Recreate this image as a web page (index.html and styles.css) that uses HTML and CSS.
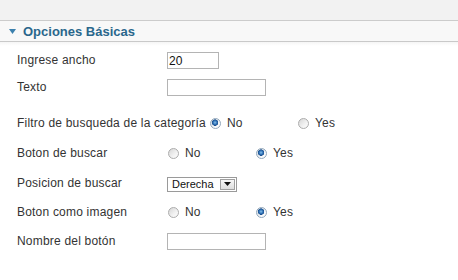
FILE: index.html
```html
<!DOCTYPE html>
<html lang="es">
<head>
<meta charset="utf-8">
<title>Opciones Básicas</title>
<link rel="stylesheet" href="styles.css">
</head>
<body>
<div class="topbar"></div>
<div class="panel-head">
  <svg class="toggle" width="7" height="5" viewBox="0 0 7 5"><polygon points="0,0 7,0 3.5,5" fill="#3b80ad"/></svg>
  <span class="panel-title">Opciones Básicas</span>
</div>
<div class="panel-body">
  <div class="group">
    <div class="row row-text">
      <span class="key">Ingrese ancho</span>
      <input class="text short" type="text" value="20">
    </div>
    <div class="row row-text">
      <span class="key">Texto</span>
      <input class="text wide" type="text" value="">
    </div>
  </div>
  <div class="group">
    <div class="row row-radio">
      <span class="key">Filtro de busqueda de la categoría</span>
      <div class="options">
        <label class="option"><input class="radio" type="radio" name="filtro" checked><span>No</span></label>
        <label class="option"><input class="radio" type="radio" name="filtro"><span>Yes</span></label>
      </div>
    </div>
    <div class="row row-radio">
      <span class="key">Boton de buscar</span>
      <div class="options">
        <label class="option"><input class="radio" type="radio" name="boton"><span>No</span></label>
        <label class="option"><input class="radio" type="radio" name="boton" checked><span>Yes</span></label>
      </div>
    </div>
    <div class="row row-select">
      <span class="key">Posicion de buscar</span>
      <div class="select">
        <span class="select-value">Derecha</span>
        <span class="select-btn"><svg width="7" height="4" viewBox="0 0 7 4"><polygon points="0,0 7,0 3.5,4" fill="#111"/></svg></span>
      </div>
    </div>
    <div class="row row-radio-short">
      <span class="key">Boton como imagen</span>
      <div class="options">
        <label class="option"><input class="radio" type="radio" name="imagen"><span>No</span></label>
        <label class="option"><input class="radio" type="radio" name="imagen" checked><span>Yes</span></label>
      </div>
    </div>
    <div class="row row-last">
      <span class="key">Nombre del botón</span>
      <input class="text wide" type="text" value="">
    </div>
  </div>
</div>
</body>
</html>
```
FILE: styles.css
```css
html, body {
  margin: 0;
  padding: 0;
  background: #ffffff;
  font-family: "Liberation Sans", Arial, sans-serif;
  font-size: 12px;
  color: #333333;
}

.topbar {
  height: 20px;
  background: #f2f2f2;
  border-bottom: 1px solid #cccccc;
}

.panel-head {
  height: 20px;
  background: #f8f8f8;
  border-bottom: 1px solid #c9c9c9;
  display: flex;
  align-items: center;
  padding-left: 9px;
  gap: 7px;
}

.toggle {
  display: block;
  margin-top: 1px;
}

.panel-title {
  font-size: 13px;
  font-weight: bold;
  color: #2a678c;
}

.panel-body {
  padding: 4px 0 0 17px;
  background: linear-gradient(#f5f5f5, #ffffff 4px);
  letter-spacing: 0.2px;
}

.group {
  display: flex;
  flex-direction: column;
}

.group + .group {
  margin-top: 8px;
}

.row {
  display: flex;
  align-items: center;
}

.row-text { height: 27px; }
.row-radio { height: 30px; }
.row-select { height: 30px; }
.row-radio-short { height: 28px; }
.row-last { height: 29px; }

.key {
  flex: 0 0 auto;
  min-width: 150px;
  box-sizing: border-box;
  padding-right: 3px;
  white-space: nowrap;
  color: #333333;
}

.text {
  box-sizing: border-box;
  height: 17px;
  margin: 2px 0 0 0;
  padding: 0 1px;
  border: 1px solid #b4b4b4;
  background: #ffffff;
  font-family: "Liberation Sans", Arial, sans-serif;
  font-size: 12px;
  color: #111111;
  outline: none;
}

.short { width: 52px; }
.wide { width: 99px; }

.options {
  display: flex;
}

.option {
  width: 88px;
  display: flex;
  align-items: center;
  gap: 6px;
  color: #333333;
}

.radio {
  -webkit-appearance: none;
  appearance: none;
  box-sizing: border-box;
  width: 11px;
  height: 11px;
  margin: 0 0 0 1px;
  border-radius: 50%;
  border: 1px solid #acacac;
  background: linear-gradient(135deg, #d6d6d6, #f2f2f2 60%, #fdfdfd);
  flex: 0 0 auto;
}

.radio:checked {
  border-color: #93a8bb;
  background:
    radial-gradient(circle at 45% 40%, #86c0ea 0, #3274b8 1.8px, #1b4f8e 3px, rgba(255,255,255,0) 3.4px),
    linear-gradient(135deg, #cfd8e0, #f4f6f8 60%, #ffffff);
}

.select {
  margin-top: 2px;
  width: 70px;
  height: 15px;
  box-sizing: border-box;
  border: 1px solid #9a9a9a;
  background: #ffffff;
  display: flex;
  align-items: stretch;
  letter-spacing: 0;
}

.select-value {
  flex: 1 1 auto;
  padding-left: 4px;
  font-size: 11px;
  line-height: 13px;
  color: #111111;
}

.select-btn {
  flex: 0 0 auto;
  width: 15px;
  box-sizing: border-box;
  margin: 1px;
  border: 1px solid #a0a0a0;
  background: linear-gradient(#f7f7f7, #dedede);
  display: flex;
  align-items: center;
  justify-content: center;
}

.select-btn svg {
  display: block;
}
```
